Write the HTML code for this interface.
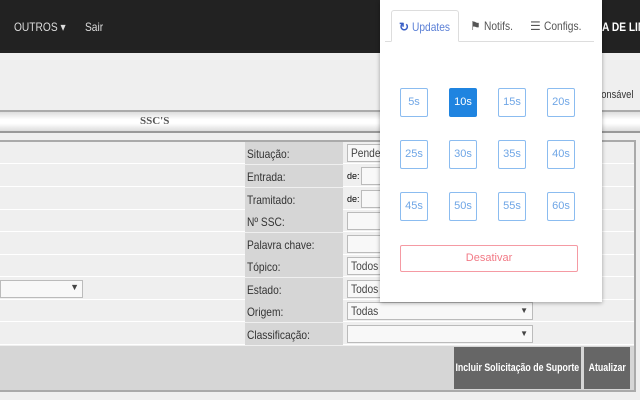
<!DOCTYPE html><html><head><meta charset="utf-8"><style>
*{margin:0;padding:0;box-sizing:border-box;white-space:nowrap}
html,body{width:640px;height:400px;overflow:hidden}
body{background:#efefef;font-family:"Liberation Sans",sans-serif;position:relative}
.nav{position:absolute;left:0;top:0;width:640px;height:53px;background:#222;color:#ddd;font-size:12px;overflow:hidden}
.nav span{position:absolute;top:20px;transform:scaleX(.85);transform-origin:left}
.abs{position:absolute}
.bar{left:0;top:110px;width:640px;height:23px;border-top:2px solid #aaa;border-bottom:2px solid #999;background:linear-gradient(#ddd,#fff 40%,#fff 60%,#ddd)}
.row{position:absolute;left:0;width:634px;height:22px;background:#efefef;border-bottom:1px solid #fff}
.lab{position:absolute;left:245px;width:98px;height:22px;background:#d6d6d6;font-size:12px;color:#333;padding:5px 0 0 2px}
.lab i,.val i{font-style:normal;display:inline-block;transform:scaleX(.85);transform-origin:left}
.val{position:absolute;left:347px;top:2px;height:18px;border:1px solid #bbb;background:#f8f8f8;font-size:12px;color:#444;padding:1px 3px;overflow:hidden}
.pop{left:380px;top:0;width:222px;height:302px;background:#fff;box-shadow:0 1px 4px rgba(0,0,0,.35)}
.tab{position:absolute;top:10px;height:32px;font-size:12px;color:#555;padding-top:9px}
.b{position:absolute;width:28px;height:29px;border:1px solid #8bbcf0;border-radius:2px;color:#6fa6e6;font-size:11px;text-align:center;line-height:27px}
.b.on{background:#1f84e0;color:#fff;border-color:#1f84e0}
.btn{position:absolute;background:#666;color:#fff;font-size:11px;font-weight:bold;top:347px;height:42px;display:flex;justify-content:center;align-items:center;overflow:hidden}
.btn span{display:block;transform:scaleX(.8);flex-shrink:0}
</style></head><body>
<div class="nav"><span style="left:14px">OUTROS ▾</span><span style="left:85px">Sair</span><span style="left:602px;font-weight:bold;color:#fff">A DE LIM</span></div>
<div class="abs" style="left:596px;top:89px;font-size:11px;color:#333;transform:scaleX(.85);transform-origin:left">ponsável</div>
<div class="abs bar"></div>
<div class="abs" style="left:140px;top:115px;font-size:11px;font-weight:bold;color:#555;font-family:'Liberation Serif',serif">SSC'S</div>
<div class="abs" style="left:0;top:140px;width:636px;height:252px;border-top:2px solid #aaa;border-bottom:2px solid #aaa;border-right:2px solid #aaa;background:#efefef"></div>
<div class="row" style="top:142px"><div class="lab"><i>Situação:</i></div><div class="val" style="width:40px"><i>Pende</i></div></div>
<div class="row" style="top:165px"><div class="lab"><i>Entrada:</i></div><span class="abs" style="left:347px;top:6px;font-size:9px">de:</span><div class="val" style="left:361px;width:20px"></div></div>
<div class="row" style="top:188px"><div class="lab"><i>Tramitado:</i></div><span class="abs" style="left:347px;top:6px;font-size:9px">de:</span><div class="val" style="left:361px;width:20px"></div></div>
<div class="row" style="top:210px"><div class="lab"><i>Nº SSC:</i></div><div class="val" style="width:40px"></div></div>
<div class="row" style="top:233px"><div class="lab"><i>Palavra chave:</i></div><div class="val" style="width:40px"></div></div>
<div class="row" style="top:255px"><div class="lab"><i>Tópico:</i></div><div class="val" style="width:40px"><i>Todos</i></div></div>
<div class="row" style="top:278px"><div class="lab"><i>Estado:</i></div><div class="val" style="width:40px"><i>Todos</i></div><div class="val" style="left:0;width:83px;font-size:9px;text-align:right">▼</div></div>
<div class="row" style="top:300px"><div class="lab"><i>Origem:</i></div><div class="val" style="width:186px"><i>Todas</i><span style="position:absolute;right:4px;font-size:8px;top:3px">▼</span></div></div>
<div class="row" style="top:323px"><div class="lab"><i>Classificação:</i></div><div class="val" style="width:186px"><span style="position:absolute;right:4px;font-size:8px;top:3px">▼</span></div></div>
<div class="abs" style="left:0;top:346px;width:634px;height:44px;background:#d6d6d6"></div>
<div class="btn" style="left:454px;width:127px"><span>Incluir Solicitação de Suporte</span></div>
<div class="btn" style="left:584px;width:46px"><span>Atualizar</span></div>
<div class="abs pop">
<div class="abs" style="left:5px;top:41px;width:209px;height:1px;background:#ddd"></div>
<div class="tab" style="left:11px;width:68px;border:1px solid #ddd;border-bottom:1px solid #fff;border-radius:3px 3px 0 0;background:#fff;color:#5a7fd6;padding-left:7px"><b style="color:#3a5fc6">↻</b> <span style="display:inline-block;transform:scaleX(.85);transform-origin:left">Updates</span></div>
<div class="tab" style="left:90px">⚑ <span style="display:inline-block;transform:scaleX(.85);transform-origin:left">Notifs.</span></div>
<div class="tab" style="left:150px">☰ <span style="display:inline-block;transform:scaleX(.85);transform-origin:left">Configs.</span></div>
<div class="b" style="left:20px;top:88px">5s</div><div class="b on" style="left:69px;top:88px">10s</div><div class="b" style="left:118px;top:88px">15s</div><div class="b" style="left:167px;top:88px">20s</div>
<div class="b" style="left:20px;top:140px">25s</div><div class="b" style="left:69px;top:140px">30s</div><div class="b" style="left:118px;top:140px">35s</div><div class="b" style="left:167px;top:140px">40s</div>
<div class="b" style="left:20px;top:192px">45s</div><div class="b" style="left:69px;top:192px">50s</div><div class="b" style="left:118px;top:192px">55s</div><div class="b" style="left:167px;top:192px">60s</div>
<div class="abs" style="left:20px;top:245px;width:178px;height:27px;border:1px solid #f59aa3;border-radius:2px;color:#f27a86;font-size:11px;text-align:center;line-height:25px">Desativar</div>
</div>
</body></html>
